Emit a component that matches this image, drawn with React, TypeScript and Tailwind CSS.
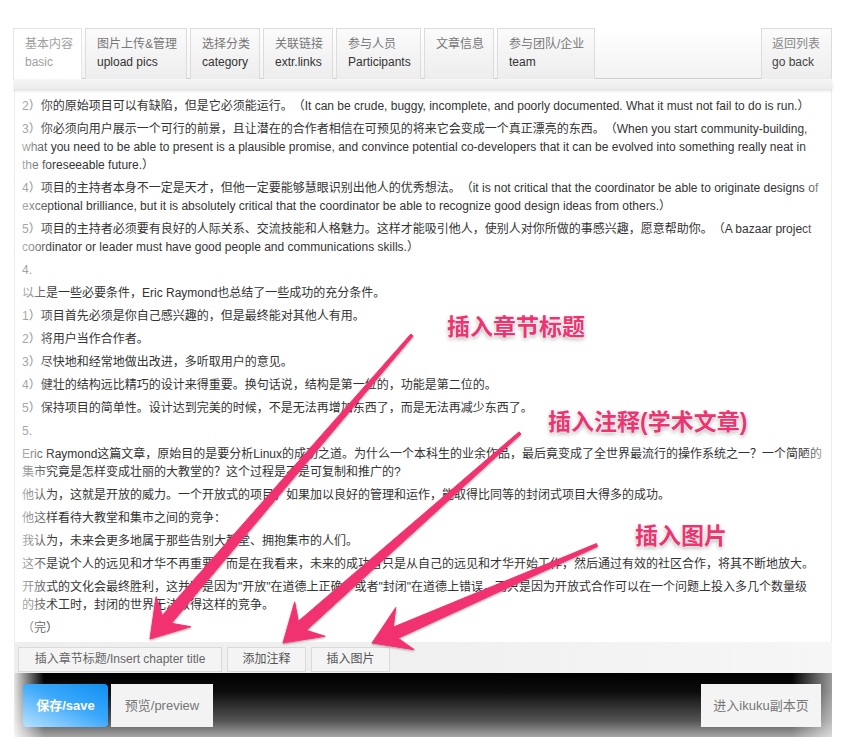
import React from "react";

const FONT = '"Liberation Sans", "Noto Sans CJK SC", sans-serif';

type Tab = { zh: string; en?: string; active?: boolean; w: string };

const tabs: Tab[] = [
  { zh: "基本内容", en: "basic", active: true, w: "w-[69px]" },
  { zh: "图片上传&管理", en: "upload pics", w: "w-[102px]" },
  { zh: "选择分类", en: "category", w: "w-[70px]" },
  { zh: "关联链接", en: "extr.links", w: "w-[70px]" },
  { zh: "参与人员", en: "Participants", w: "w-[85px]" },
  { zh: "文章信息", w: "w-[70px]" },
  { zh: "参与团队/企业", en: "team", w: "w-[98px]" },
];

const paragraphs: string[][] = [
  ["2）你的原始项目可以有缺陷，但是它必须能运行。（It can be crude, buggy, incomplete, and poorly documented. What it must not fail to do is run.）"],
  [
    "3）你必须向用户展示一个可行的前景，且让潜在的合作者相信在可预见的将来它会变成一个真正漂亮的东西。（When you start community-building,",
    "what you need to be able to present is a plausible promise, and convince potential co-developers that it can be evolved into something really neat in",
    "the foreseeable future.）",
  ],
  [
    "4）项目的主持者本身不一定是天才，但他一定要能够慧眼识别出他人的优秀想法。（it is not critical that the coordinator be able to originate designs of",
    "exceptional brilliance, but it is absolutely critical that the coordinator be able to recognize good design ideas from others.）",
  ],
  [
    "5）项目的主持者必须要有良好的人际关系、交流技能和人格魅力。这样才能吸引他人，使别人对你所做的事感兴趣，愿意帮助你。（A bazaar project",
    "coordinator or leader must have good people and communications skills.）",
  ],
  ["4."],
  ["以上是一些必要条件，Eric Raymond也总结了一些成功的充分条件。"],
  ["1）项目首先必须是你自己感兴趣的，但是最终能对其他人有用。"],
  ["2）将用户当作合作者。"],
  ["3）尽快地和经常地做出改进，多听取用户的意见。"],
  ["4）健壮的结构远比精巧的设计来得重要。换句话说，结构是第一位的，功能是第二位的。"],
  ["5）保持项目的简单性。设计达到完美的时候，不是无法再增加东西了，而是无法再减少东西了。"],
  ["5."],
  [
    "Eric Raymond这篇文章，原始目的是要分析Linux的成功之道。为什么一个本科生的业余作品，最后竟变成了全世界最流行的操作系统之一？一个简陋的",
    "集市究竟是怎样变成壮丽的大教堂的？这个过程是不是可复制和推广的?",
  ],
  ["他认为，这就是开放的威力。一个开放式的项目，如果加以良好的管理和运作，能取得比同等的封闭式项目大得多的成功。"],
  ["他这样看待大教堂和集市之间的竞争："],
  ["我认为，未来会更多地属于那些告别大教堂、拥抱集市的人们。"],
  ["这不是说个人的远见和才华不再重要，而是在我看来，未来的成功者只是从自己的远见和才华开始工作，然后通过有效的社区合作，将其不断地放大。"],
  [
    '开放式的文化会最终胜利，这并不是因为"开放"在道德上正确，或者"封闭"在道德上错误，而只是因为开放式合作可以在一个问题上投入多几个数量级',
    "的技术工时，封闭的世界无法取得这样的竞争。",
  ],
  ["（完）"],
];

function arrowPoints(tx: number, ty: number, px: number, py: number): string {
  const w0 = 3;
  const w1 = 12;
  const L = 36;
  const W = 23;
  const dx = px - tx;
  const dy = py - ty;
  const len = Math.hypot(dx, dy);
  const ux = dx / len;
  const uy = dy / len;
  const nx = -uy;
  const ny = ux;
  const bx = px - ux * L;
  const by = py - uy * L;
  const jx = px - ux * L * 0.72;
  const jy = py - uy * L * 0.72;
  const pts: [number, number][] = [
    [tx + (nx * w0) / 2, ty + (ny * w0) / 2],
    [jx + (nx * w1) / 2, jy + (ny * w1) / 2],
    [bx + nx * W, by + ny * W],
    [px, py],
    [bx - nx * W, by - ny * W],
    [jx - (nx * w1) / 2, jy - (ny * w1) / 2],
    [tx - (nx * w0) / 2, ty - (ny * w0) / 2],
  ];
  return pts.map((p) => `${p[0].toFixed(1)},${p[1].toFixed(1)}`).join(" ");
}

export default function App() {
  return (
    <div
      className="relative w-[850px] h-[737px] overflow-hidden bg-white text-[#333] [text-spacing-trim:space-all]"
      style={{ fontFamily: FONT }}
    >
      <div className="h-[28px]" />

      {/* Tab bar */}
      <div className="ml-[13px] w-[819px] h-[51px] flex border-b border-[#cfcfcf] bg-gradient-to-b from-white to-[#f3f3f3]">
        {tabs.map((t, i) => (
          <div
            key={i}
            className={
              (t.active
                ? "h-[52px] bg-white border-[#e6e6e6] text-[#a0a0a0] relative z-10 "
                : "h-[51px] bg-gradient-to-b from-[#fbfbfb] to-[#ededed] border-[#dcdcdc] ") +
              "mr-[3px] shrink-0 whitespace-nowrap pl-[11px] pt-[6px] border border-b-0 text-[12px] leading-[18px] " +
              t.w
            }
          >
            <div className={t.active ? "" : "text-[#777]"}>{t.zh}</div>
            {t.en && <div className={t.active ? "" : "text-[#333]"}>{t.en}</div>}
          </div>
        ))}
        <div className="ml-auto shrink-0 whitespace-nowrap h-[51px] w-[71px] pl-[10px] pt-[6px] bg-gradient-to-b from-[#fbfbfb] to-[#ededed] border border-b-0 border-[#dcdcdc] text-[12px] leading-[18px]">
          <div className="text-[#888]">返回列表</div>
          <div className="text-[#444]">go back</div>
        </div>
      </div>

      {/* shadow band */}
      <div className="ml-[14px] w-[818px] h-[10px] bg-gradient-to-b from-[#f6f6f6] to-[#ececec] shadow-[0_2px_3px_rgba(0,0,0,0.12)] relative z-10" />

      {/* content */}
      <div className="relative ml-[14px] w-[818px] h-[553px] overflow-hidden border-x border-[#ececec] px-[7px] pt-[8px] bg-white">
        <div className="flex flex-col gap-[5px] text-[12px] leading-[18px] text-[#333]">
          {paragraphs.map((p, i) => (
            <p key={i} className="whitespace-nowrap">
              {p.map((line, j) => (
                <span key={j} className="block">
                  {line}
                </span>
              ))}
            </p>
          ))}
        </div>
        <div className="absolute left-0 top-0 bottom-0 w-[40px] bg-gradient-to-r from-white/75 to-transparent" />
        <div className="absolute right-0 top-0 bottom-0 w-[30px] bg-gradient-to-l from-white/70 to-transparent" />
      </div>

      {/* toolbar */}
      <div className="ml-[14px] w-[818px] h-[31px] bg-gradient-to-r from-[#eeeeee] via-[#f0f0f0] to-[#f6f6f6] flex items-start gap-[5px] pl-[4px] pt-[5px]">
        <button className="h-[25px] w-[204px] whitespace-nowrap bg-[#f4f4f4] border border-[#dadada] text-[12px] text-[#666] leading-[23px]">
          插入章节标题/Insert chapter title
        </button>
        <button className="h-[25px] w-[79px] bg-[#f4f4f4] border border-[#dadada] text-[12px] text-[#555] leading-[23px]">
          添加注释
        </button>
        <button className="h-[25px] w-[79px] bg-[#f4f4f4] border border-[#dadada] text-[12px] text-[#555] leading-[23px]">
          插入图片
        </button>
      </div>

      {/* bottom bar */}
      <div className="relative ml-[14px] w-[818px] h-[64px] bg-[linear-gradient(to_bottom,#000_0%,#0d0d0d_30%,#555_75%,#a5a5a5_100%)] flex items-start pt-[11px] pl-[9px] pr-[11px]">
        <div className="absolute left-0 top-0 bottom-0 w-[30px] bg-gradient-to-r from-white/90 to-transparent" />
        <div className="absolute right-0 top-0 bottom-0 w-[40px] bg-gradient-to-l from-white/60 to-transparent" />
        <button className="relative h-[43px] w-[85px] rounded-[4px] bg-[linear-gradient(205deg,#1090f2_0%,#3aa8fb_45%,#b8e2ff_100%)] text-white font-bold text-[13px]">
          保存/save
        </button>
        <button className="relative ml-[3px] h-[43px] w-[102px] bg-[#f3f3f3] text-[#777] text-[13px]">
          预览/preview
        </button>
        <button className="relative ml-auto h-[43px] w-[120px] bg-[#f4f4f4] text-[#777] text-[13px]">
          进入ikuku副本页
        </button>
      </div>

      {/* annotation arrows */}
      <svg className="absolute left-0 top-0 pointer-events-none" width="850" height="737" viewBox="0 0 850 737">
        <defs>
          <filter id="sh" x="-10%" y="-10%" width="120%" height="120%">
            <feDropShadow dx="0" dy="1" stdDeviation="1.2" floodColor="#000" floodOpacity="0.35" />
          </filter>
        </defs>
        <g fill="#f2336f" stroke="#f2336f" strokeWidth="1" strokeLinejoin="round" filter="url(#sh)">
          <polygon points={arrowPoints(412, 335, 150, 639)} />
          <polygon points={arrowPoints(520, 433, 283, 643)} />
          <polygon points={arrowPoints(597, 545, 372, 643)} />
        </g>
      </svg>

      {/* annotation labels */}
      <div className="absolute left-[447px] top-[313px] text-[23px] leading-[28px] font-bold text-[#ec3470] [text-shadow:0_0_2px_#fff,0_0_2px_#fff,0_2px_4px_rgba(0,0,0,0.35)]">
        插入章节标题
      </div>
      <div className="absolute left-[548px] top-[408px] text-[23px] leading-[28px] font-bold text-[#ec3470] [text-shadow:0_0_2px_#fff,0_0_2px_#fff,0_2px_4px_rgba(0,0,0,0.35)]">
        插入注释(学术文章)
      </div>
      <div className="absolute left-[635px] top-[522px] text-[23px] leading-[28px] font-bold text-[#ec3470] [text-shadow:0_0_2px_#fff,0_0_2px_#fff,0_2px_4px_rgba(0,0,0,0.35)]">
        插入图片
      </div>
    </div>
  );
}
